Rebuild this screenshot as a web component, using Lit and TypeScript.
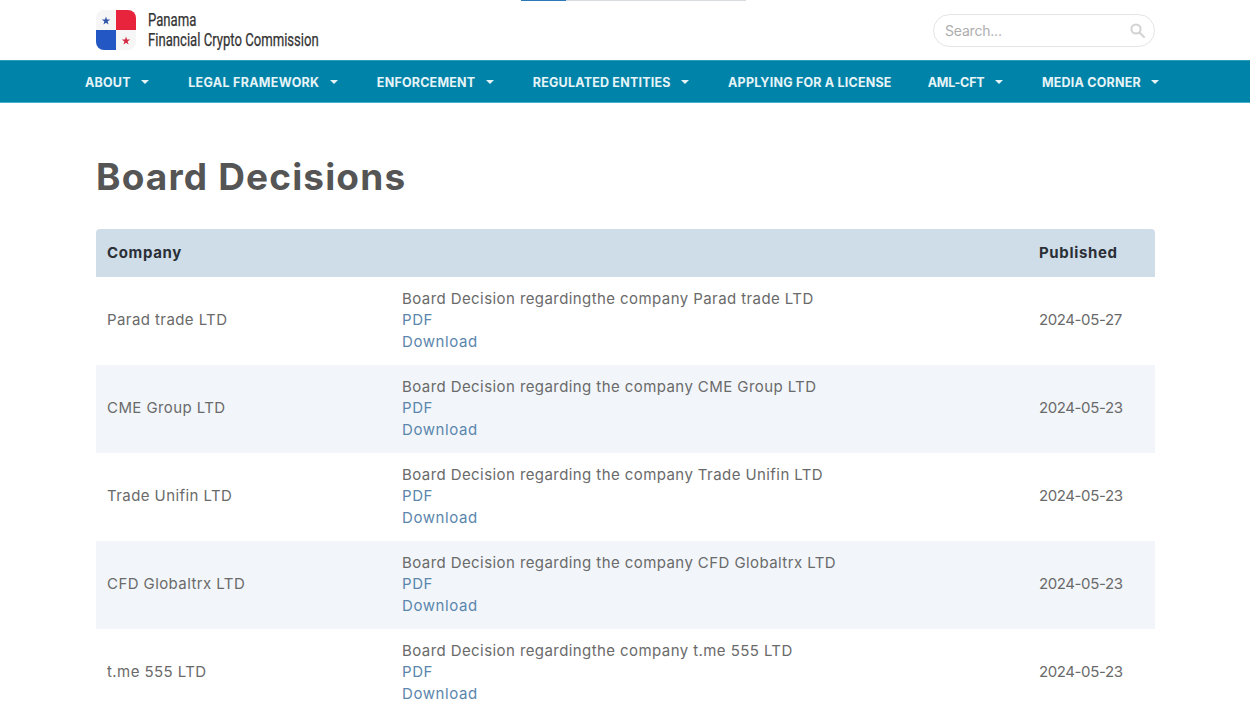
import { LitElement, css, html, nothing } from 'lit';
import { customElement } from 'lit/decorators.js';

const NAV = [
  { label: 'ABOUT', caret: true, cls: '' },
  { label: 'LEGAL FRAMEWORK', caret: true, cls: 'wide' },
  { label: 'ENFORCEMENT', caret: true, cls: '' },
  { label: 'REGULATED ENTITIES', caret: true, cls: '' },
  { label: 'APPLYING FOR A LICENSE', caret: false, cls: '' },
  { label: 'AML-CFT', caret: true, cls: 'tight' },
  { label: 'MEDIA CORNER', caret: true, cls: '' },
];

const ROWS = [
  { company: 'Parad trade LTD', title: 'Board Decision regardingthe company Parad trade LTD', date: '2024-05-27' },
  { company: 'CME Group LTD', title: 'Board Decision regarding the company CME Group LTD', date: '2024-05-23' },
  { company: 'Trade Unifin LTD', title: 'Board Decision regarding the company Trade Unifin LTD', date: '2024-05-23' },
  { company: 'CFD Globaltrx LTD', title: 'Board Decision regarding the company CFD Globaltrx LTD', date: '2024-05-23' },
  { company: 't.me 555 LTD', title: 'Board Decision regardingthe company t.me 555 LTD', date: '2024-05-23' },
];

@customElement('app-root')
export class AppRoot extends LitElement {
  static styles = css`
    :host {
      display: block;
      height: 710px;
      overflow: hidden;
      background: #fff;
      font-family: Inter, 'Open Sans', sans-serif;
      color: #555;
    }
    .progress {
      display: flex;
      height: 1px;
      margin-left: 521px;
      width: 225px;
      background: #d9dcdf;
      margin-bottom: -1px;
    }
    .progress-fill {
      width: 45px;
      background: #2a78b8;
    }
    .top {
      height: 60px;
      padding: 0 95px 0 96px;
      display: flex;
      align-items: center;
      justify-content: space-between;
    }
    .brand {
      display: flex;
      align-items: center;
      gap: 12px;
    }
    .logo {
      display: block;
    }
    .brand-text {
      font-family: Roboto, sans-serif;
      font-size: 18px;
      line-height: 20px;
      color: #333;
      white-space: nowrap;
      transform: scaleX(0.728);
      transform-origin: left center;
      -webkit-text-stroke: 0.25px #333;
      width: 171px;
    }
    .search {
      width: 222px;
      height: 33px;
      box-sizing: border-box;
      border: 1px solid #e4e4e4;
      border-radius: 17px;
      display: flex;
      align-items: center;
      justify-content: space-between;
      padding: 0 9px 0 11px;
      font-size: 14px;
      letter-spacing: -0.2px;
      color: #aeaeae;
    }
    nav {
      height: 43px;
      box-sizing: border-box;
      background: #0083a8;
      border-top: 1px solid #2a9cb8;
      border-bottom: 1px solid #3fb0d0;
      padding-top: 1px;
      display: flex;
      align-items: center;
      gap: 39px;
      padding-left: 85px;
      color: #e6f4f8;
      font-size: 12.5px;
      font-weight: 700;
      letter-spacing: 0.2px;
      white-space: nowrap;
    }
    .nav-item {
      display: flex;
      align-items: center;
      gap: 10.5px;
    }
    .nav-item.wide {
      letter-spacing: 0.3px;
    }
    .nav-item.tight {
      letter-spacing: -0.2px;
      margin-left: -3px;
    }
    .caret {
      width: 0;
      height: 0;
      border-left: 4.5px solid transparent;
      border-right: 4.5px solid transparent;
      border-top: 4px solid #e6f4f8;
    }
    main {
      padding: 0 95px 0 96px;
    }
    h1 {
      margin: 0;
      padding-top: 50px;
      height: 76px;
      line-height: 48px;
      font-size: 37px;
      font-weight: 700;
      letter-spacing: 1.15px;
      color: #555;
    }
    .table {
      display: grid;
      grid-template-columns: 306px 1fr 116px;
      font-size: 15px;
      letter-spacing: 0.42px;
      color: #6a6a6a;
    }
    .head {
      display: contents;
    }
    .head > div {
      height: 48px;
      box-sizing: border-box;
      padding-bottom: 2px;
      background: #cfdde9;
      display: flex;
      align-items: center;
      font-weight: 700;
      letter-spacing: 0.65px;
      color: #2b2f36;
    }
    .head > div:first-child {
      border-radius: 4px 0 0 0;
      padding-left: 11px;
    }
    .head > div:last-child {
      border-radius: 0 4px 0 0;
    }
    .row {
      display: contents;
    }
    .cell {
      height: 88px;
      box-sizing: border-box;
      padding-bottom: 2px;
      display: flex;
      flex-direction: column;
      justify-content: center;
      line-height: 21.5px;
    }
    .row .cell:first-child {
      padding-left: 11px;
    }
    .row.odd .cell {
      background: #f2f6fa;
    }
    .date {
      letter-spacing: -0.4px;
    }
    a {
      color: #5b86ad;
      text-decoration: none;
      letter-spacing: 0.6px;
    }
  `;

  private renderLogo() {
    return html`<svg class="logo" width="40" height="40" viewBox="0 0 40 40">
      <defs>
        <clipPath id="logo-clip"><rect width="40" height="40" rx="8"></rect></clipPath>
      </defs>
      <g clip-path="url(#logo-clip)">
        <rect width="40" height="40" fill="#f6f6f6"></rect>
        <rect x="20" width="20" height="20" fill="#e8243c"></rect>
        <rect y="20" width="20" height="20" fill="#2358c4"></rect>
      </g>
      <polygon points="10,6.5 11,9.6 14.2,9.6 11.6,11.5 12.6,14.5 10,12.7 7.4,14.5 8.4,11.5 5.8,9.6 9,9.6" fill="#2f55a8"></polygon>
      <polygon points="30,26.5 31,29.6 34.2,29.6 31.6,31.5 32.6,34.5 30,32.7 27.4,34.5 28.4,31.5 25.8,29.6 29,29.6" fill="#d32a44"></polygon>
    </svg>`;
  }

  render() {
    return html`
      <div class="progress"><div class="progress-fill"></div></div>
      <header class="top">
        <div class="brand">
          ${this.renderLogo()}
          <div class="brand-text">Panama<br />Financial Crypto Commission</div>
        </div>
        <div class="search">
          <span>Search...</span>
          <svg width="15" height="15" viewBox="0 0 15 15" fill="none" stroke="#d2d2d2" stroke-width="2">
            <circle cx="6" cy="6" r="4.6"></circle>
            <path d="M9.5 9.5 14 14" stroke-linecap="round"></path>
          </svg>
        </div>
      </header>
      <nav>
        ${NAV.map(
          (item) => html`<div class="nav-item ${item.cls}">
            <span>${item.label}</span>
            ${item.caret ? html`<span class="caret"></span>` : nothing}
          </div>`
        )}
      </nav>
      <main>
        <h1>Board Decisions</h1>
        <div class="table">
          <div class="head">
            <div>Company</div>
            <div></div>
            <div>Published</div>
          </div>
          ${ROWS.map(
            (row, i) => html`<div class="row ${i % 2 ? 'odd' : ''}">
              <div class="cell">${row.company}</div>
              <div class="cell">
                <span>${row.title}</span>
                <a>PDF</a>
                <a>Download</a>
              </div>
              <div class="cell date">${row.date}</div>
            </div>`
          )}
        </div>
      </main>
    `;
  }
}
